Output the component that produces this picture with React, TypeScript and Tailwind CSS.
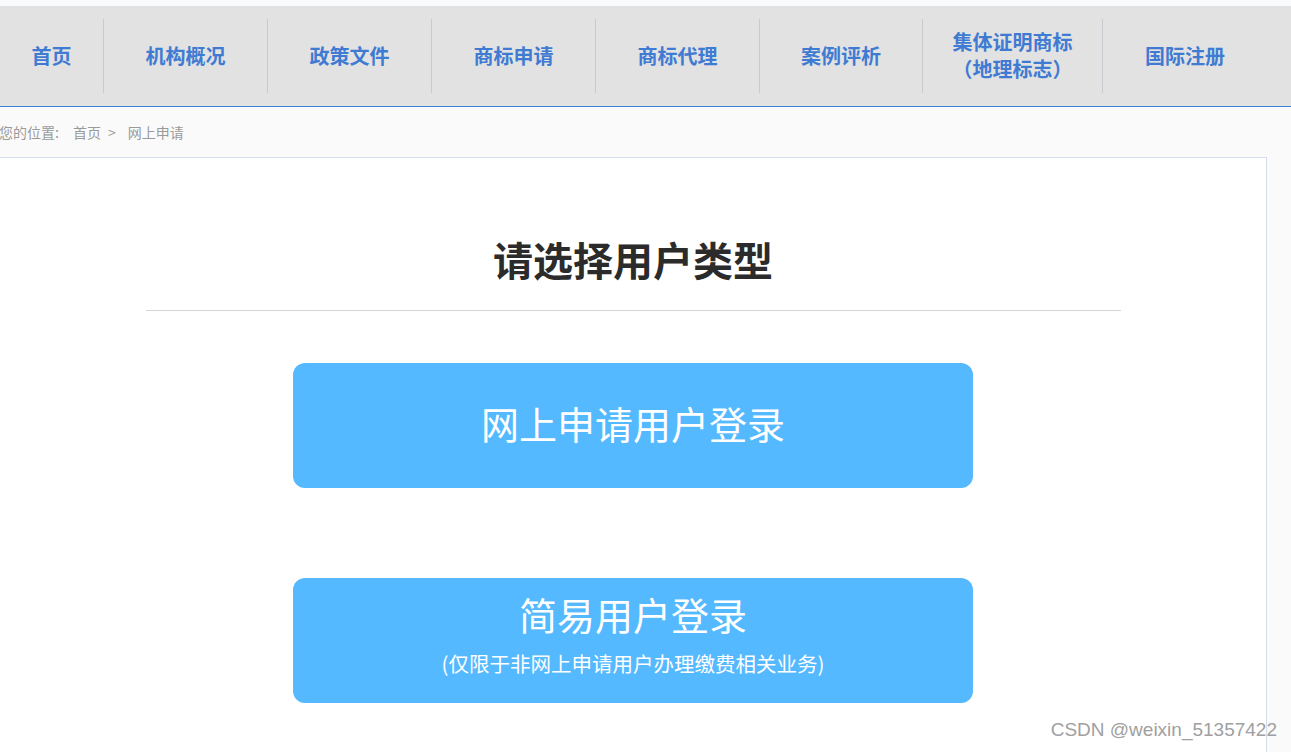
const navItems = [
  { label: '首页', width: 'w-[104px]' },
  { label: '机构概况', width: 'w-[164px]' },
  { label: '政策文件', width: 'w-[164px]' },
  { label: '商标申请', width: 'w-[164px]' },
  { label: '商标代理', width: 'w-[164px]' },
  { label: '案例评析', width: 'w-[163px]' },
  { label: '集体证明商标\n（地理标志）', width: 'w-[180px]' },
  { label: '国际注册', width: 'w-[164px]' },
];

const font = "font-['Noto_Sans_CJK_SC','Noto_Sans',sans-serif]";

export default function App() {
  return (
    <div className={`relative w-[1291px] h-[752px] overflow-hidden bg-[#fafafa] ${font}`}>
      {/* top strip */}
      <div className="h-[6px] bg-[#fafbfd]" />

      {/* main nav */}
      <div className="h-[101px] bg-[#e2e2e2] border-b border-[#3b7fd6] flex items-center">
        {navItems.map((item, index) => (
          <div
            key={item.label}
            className={`${item.width} h-[74px] flex items-center justify-center pb-[2px] ${index < navItems.length - 1 ? 'border-r border-[#c9c9cf]' : ''}`}
          >
            <div className="text-center whitespace-pre-line text-[20px] font-bold leading-[27px] text-[#3f7bd2]">
              {item.label}
            </div>
          </div>
        ))}
      </div>

      {/* breadcrumb */}
      <div className="h-[50px] flex items-center text-[14px] text-[#9a9a9a] -ml-[1px]">
        <span>您的位置:</span>
        <span className="ml-[14px]">首页</span>
        <span className="ml-[7px]">&gt;</span>
        <span className="ml-[12px]">网上申请</span>
      </div>

      {/* content panel */}
      <div className="w-[1267px] h-[600px] bg-white border-t border-r border-[#d4deea] flex flex-col items-center">
        <h1 className="mt-[73px] text-[40px] font-bold leading-[56px] text-[#2b2b2b]">请选择用户类型</h1>
        <div className="mt-[23px] w-[975px] h-px bg-[#d6d6d6]" />

        <button className="mt-[52px] w-[680px] h-[125px] rounded-[12px] bg-[#55b9ff] flex items-center justify-center pb-[6px] text-white text-[38px] font-normal leading-[50px]">
          网上申请用户登录
        </button>

        <button className="mt-[90px] w-[680px] h-[125px] rounded-[12px] bg-[#55b9ff] flex flex-col items-center text-white">
          <span className="mt-[10px] text-[38px] font-normal leading-[52px]">简易用户登录</span>
          <span className="mt-[9px] text-[20.5px] font-normal leading-[28px]">(仅限于非网上申请用户办理缴费相关业务)</span>
        </button>
      </div>

      {/* watermark */}
      <div className="absolute right-[14px] bottom-[8px] text-[19px] text-[#a0a0a0] font-['Liberation_Sans',sans-serif]">
        CSDN @weixin_51357422
      </div>
    </div>
  );
}
